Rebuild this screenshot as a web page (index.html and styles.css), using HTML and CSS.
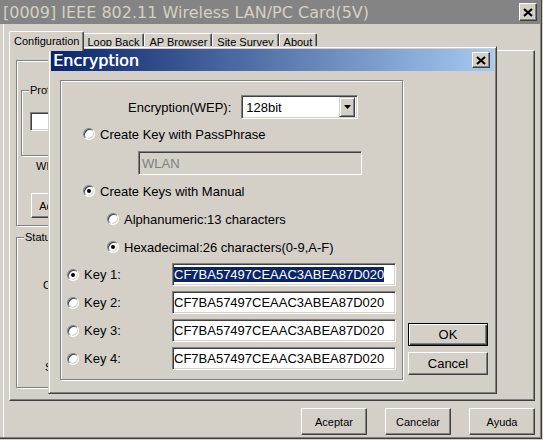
FILE: index.html
```html
<!DOCTYPE html>
<html>
<head>
<meta charset="utf-8">
<title>IEEE 802.11 Wireless LAN/PC Card - Encryption</title>
<link rel="stylesheet" href="styles.css">
</head>
<body>

<!-- main utility window (inactive, behind the encryption dialog) -->
<div class="window">
  <div class="caption">
    <span class="caption-text">[0009] IEEE 802.11 Wireless LAN/PC Card(5V)</span>
    <span class="close big">
      <svg width="10" height="9" viewBox="0 0 10 9"><path d="M1 1L9 8M9 1L1 8" stroke="#000" stroke-width="2.2"/></svg>
    </span>
  </div>

  <div class="tabs">
    <div class="tab active">Configuration</div>
    <div class="tab">Loop Back</div>
    <div class="tab">AP Browser</div>
    <div class="tab">Site Survey</div>
    <div class="tab">About</div>
  </div>

  <div class="tabpanel">
    <div class="frame">
      <div class="group profile">
        <span class="group-label">Profile Name</span>
        <div class="edit profile-edit"></div>
      </div>
      <div class="cfg-label">WEP Key</div>
      <div class="btn add-btn">Add</div>
    </div>
    <div class="group status">
      <span class="group-label">Status</span>
      <div class="status-line first">Channel :</div>
      <div class="status-line second">SSID :</div>
    </div>
  </div>

  <div class="footer">
    <div class="btn">Aceptar</div>
    <div class="btn">Cancelar</div>
    <div class="btn">Ayuda</div>
  </div>
</div>

<!-- encryption dialog -->
<div class="dialog">
  <div class="dlg-caption">
    <span class="dlg-title">Encryption</span>
    <span class="close small">
      <svg width="10" height="9" viewBox="0 0 10 9"><path d="M1 1L9 8M9 1L1 8" stroke="#000" stroke-width="2.2"/></svg>
    </span>
  </div>

  <div class="dlg-body">
    <div class="enc">
      <div class="row row-wep">
        <span class="lbl">Encryption(WEP):</span>
        <div class="combo">
          <span class="combo-text">128bit</span>
          <span class="combo-btn"><svg width="7" height="4" viewBox="0 0 7 4"><path d="M0 0h7L3.5 4z" fill="#000"/></svg></span>
        </div>
      </div>

      <div class="row opt opt-pp"><span class="radio"></span>Create Key with PassPhrase</div>
      <div class="edit pp-field disabled">WLAN</div>

      <div class="row opt opt-manual"><span class="radio on"></span>Create Keys with Manual</div>
      <div class="row opt opt-sub"><span class="radio"></span>Alphanumeric:13 characters</div>
      <div class="row opt opt-sub"><span class="radio on"></span>Hexadecimal:26 characters(0-9,A-F)</div>

      <div class="row key first-key">
        <span class="radio on"></span><span class="key-lbl">Key 1:</span>
        <div class="edit key-field"><span class="sel">CF7BA57497CEAAC3ABEA87D020</span></div>
      </div>
      <div class="row key">
        <span class="radio"></span><span class="key-lbl">Key 2:</span>
        <div class="edit key-field">CF7BA57497CEAAC3ABEA87D020</div>
      </div>
      <div class="row key">
        <span class="radio"></span><span class="key-lbl">Key 3:</span>
        <div class="edit key-field">CF7BA57497CEAAC3ABEA87D020</div>
      </div>
      <div class="row key">
        <span class="radio"></span><span class="key-lbl">Key 4:</span>
        <div class="edit key-field">CF7BA57497CEAAC3ABEA87D020</div>
      </div>
    </div>

    <div class="dlg-buttons">
      <div class="btn default">OK</div>
      <div class="btn">Cancel</div>
    </div>
  </div>
</div>

</body>
</html>
```
FILE: styles.css
```css
/* classic grey dialog look */
body        { margin: 0; background: #d4d0c8; overflow: hidden;
              font-family: "Liberation Sans", Arial, sans-serif; color: #000; }

.window     { position: relative; width: 542px; height: 439px; box-sizing: border-box;
              background: #d4d0c8; border-right: 1px solid #404040; border-bottom: 1px solid #404040;
              box-shadow: inset -1px -1px #808080, inset 3px 0 #d4d0c8, inset 4px 0 #fff; font-size: 11px; }

/* title bars */
.caption    { height: 24px; display: flex; align-items: center; justify-content: space-between;
              background: #848484; color: #d4d0c8; padding: 0 4px 0 3px;
              font-family: "DejaVu Sans", Verdana, sans-serif; font-size: 16px; }
.caption-text { white-space: nowrap; }

.close      { display: flex; align-items: center; justify-content: center; box-sizing: border-box;
              background: #d4d0c8; border: 1px solid; border-color: #fff #404040 #404040 #fff;
              box-shadow: inset -1px -1px #808080; }
.close.big  { width: 18px; height: 18px; }
.close.small{ width: 18px; height: 16px; margin-right: 4px; }

/* tab strip */
.tabs       { display: flex; align-items: flex-end; height: 26px; padding-left: 11px; }
.tab        { height: 17px; box-sizing: border-box; padding: 2px 4px 0; line-height: 13px;
              border: 1px solid; border-bottom: none; border-color: #fff #404040 #fff #fff;
              border-radius: 2px 2px 0 0; box-shadow: inset -1px 0 #808080; white-space: nowrap; }
.tab.active { position: relative; z-index: 1; height: 20px; margin: 0 -2px -1px; padding-top: 3px;
              background: #d4d0c8; }

.tabpanel   { width: 526px; height: 351px; box-sizing: border-box; margin-left: 9px;
              border: 1px solid; border-color: #fff #404040 #404040 #fff;
              box-shadow: inset -1px -1px #808080; padding: 9px 0 0 6px; }

/* etched frames and group boxes */
.frame, .group { box-sizing: border-box; border: 1px solid #808080; box-shadow: inset 1px 1px #fff, 1px 1px #fff; }
.group      { position: relative; }
.group-label { position: absolute; top: -7px; left: 7px; padding: 0 1px; background: #d4d0c8; line-height: 13px; }

.frame      { width: 450px; height: 166px; padding: 29px 0 0 4px; }
.profile    { width: 400px; height: 66px; padding: 21px 0 0 8px; }
.profile-edit { width: 200px; height: 19px; }
.cfg-label  { margin: 4px 0 0 15px; line-height: 13px; }
.add-btn    { width: 36px; height: 25px; margin: 20px 0 0 10px; }

.status     { width: 450px; height: 151px; margin-top: 11px; }
.status-line { line-height: 13px; margin-left: 26px; }
.status-line.first  { margin-top: 41px; }
.status-line.second { margin-top: 69px; margin-left: 28px; }

.footer     { display: flex; justify-content: flex-end; gap: 18px; margin-top: 7px; padding-right: 6px; }
.footer .btn { width: 66px; height: 27px; }

/* push buttons */
.btn        { display: flex; align-items: center; justify-content: center; box-sizing: border-box;
              background: #d4d0c8; border: 1px solid; border-color: #fff #404040 #404040 #fff;
              box-shadow: inset -1px -1px #808080; }
.btn.default { border-color: #000; box-shadow: inset 1px 1px #fff, inset -1px -1px #404040, inset -2px -2px #808080; }

/* sunken edit box */
.edit       { display: flex; align-items: center; box-sizing: border-box; background: #fff;
              border: 1px solid; border-color: #808080 #fff #fff #808080;
              box-shadow: inset 1px 1px #404040, inset -1px -1px #d4d0c8; white-space: nowrap; overflow: hidden; }
.edit.disabled { background: #d4d0c8; color: #808080; }

/* encryption dialog */
.dialog     { position: absolute; left: 48px; top: 46px; width: 449px; height: 348px; box-sizing: border-box;
              background: #d4d0c8; padding: 2px; border: 1px solid; border-color: #d4d0c8 #404040 #404040 #d4d0c8;
              box-shadow: inset 1px 1px #fff, inset -1px -1px #808080; font-size: 13px; }

.dlg-caption { height: 22px; display: flex; align-items: center; justify-content: space-between;
               background: linear-gradient(to right, #0a246a, #a6caf0); color: #fff; }
.dlg-title  { font-family: "DejaVu Sans", Verdana, sans-serif; font-size: 16px; padding-left: 2px;
              text-shadow: 0.4px 0 #fff; }

.dlg-body   { display: flex; padding: 9px 0 0 9px; }
.enc        { width: 343px; height: 300px; box-sizing: border-box; border: 1px solid #808080;
              box-shadow: inset 1px 1px #fff, 1px 1px #fff; }
.dlg-buttons { display: flex; flex-direction: column; gap: 6px; align-self: flex-end; margin: 0 0 5px 5px; }
.dlg-buttons .btn { width: 80px; height: 23px; }

.row        { display: flex; align-items: center; white-space: nowrap; }
.row-wep    { height: 24px; margin-top: 14px; padding-left: 67px; }
.row-wep .lbl { margin-right: 10px; }

.combo      { display: flex; align-items: center; justify-content: space-between; box-sizing: border-box;
              width: 117px; height: 24px; background: #fff; padding: 2px;
              border: 1px solid; border-color: #808080 #fff #fff #808080;
              box-shadow: inset 1px 1px #404040, inset -1px -1px #d4d0c8; }
.combo-text { padding-left: 2px; }
.combo-btn  { display: flex; align-items: center; justify-content: center; box-sizing: border-box;
              width: 16px; height: 20px; background: #d4d0c8;
              border: 1px solid; border-color: #d4d0c8 #404040 #404040 #d4d0c8;
              box-shadow: inset 1px 1px #fff, inset -1px -1px #808080; }

.opt        { height: 28px; }
.opt-pp     { margin-top: 1px; padding-left: 22px; }
.opt-manual { margin-top: 2px; padding-left: 22px; }
.opt-sub    { padding-left: 46px; }
.pp-field   { width: 224px; height: 24px; margin: 3px 0 0 77px; padding-left: 3px; }

.radio      { position: relative; flex: none; width: 12px; height: 12px; box-sizing: border-box; margin-right: 5px;
              border-radius: 50%; background: #fff; border: 1px solid; border-color: #808080 #fff #fff #808080;
              box-shadow: inset 1px 1px #404040, inset -1px -1px #d4d0c8; }
.radio.on::after { content: ""; position: absolute; left: 3px; top: 3px; width: 4px; height: 4px;
                   border-radius: 50%; background: #000; }

.key        { height: 23px; margin-top: 5px; padding-left: 6px; }
.key.first-key { margin-top: 2px; }
.key-lbl    { width: 88px; }
.key-field  { width: 224px; height: 23px; padding-left: 1px; }
.sel        { background: #0a246a; color: #fff; line-height: 15px; }
```
